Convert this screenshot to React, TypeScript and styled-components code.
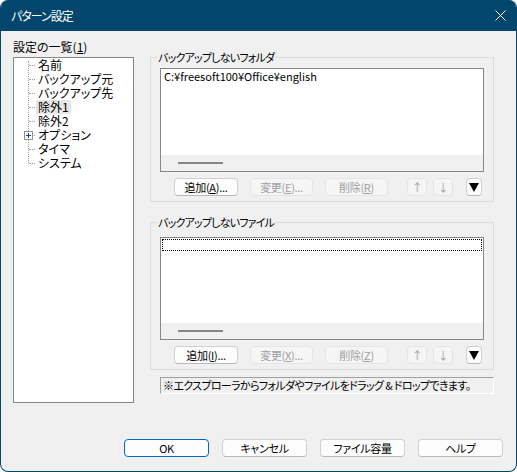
import React from "react";
import styled, { createGlobalStyle } from "styled-components";

const GlobalStyle = createGlobalStyle`
  html, body {
    margin: 0;
    padding: 0;
    background: #ffffff;
  }
  * {
    box-sizing: border-box;
  }
`;

const Window = styled.div`
  width: 517px;
  height: 472px;
  display: flex;
  flex-direction: column;
  background: #f0f0f0;
  border: 1px solid #02466d;
  border-top: none;
  border-radius: 8px;
  overflow: hidden;
  font-family: "Noto Sans CJK JP", "Noto Sans", sans-serif;
  font-size: 12px;
  font-feature-settings: "palt";
  color: #000000;
`;

const TitleBar = styled.div`
  height: 31px;
  flex: none;
  display: flex;
  align-items: center;
  justify-content: space-between;
  padding: 0 10px 0 10px;
  background: #02466d;
  color: #ffffff;
  font-size: 12px;
  letter-spacing: -1px;
`;

const Main = styled.div`
  display: flex;
  padding: 9px 22px 0 12px;
  gap: 16px;
`;

const LeftColumn = styled.div`
  width: 121px;
  display: flex;
  flex-direction: column;
  gap: 3px;
`;

const Caption = styled.div`
  line-height: 14px;
  height: 14px;
`;

const TreeBox = styled.div`
  height: 346px;
  background: #ffffff;
  border: 1px solid #828790;
`;

const TreeList = styled.ul`
  position: relative;
  list-style: none;
  margin: 0;
  padding: 0;
  &::before {
    content: "";
    position: absolute;
    left: 14px;
    top: 3px;
    height: 102px;
    border-left: 1px dotted #a0a0a0;
  }
`;

const TreeRow = styled.li`
  position: relative;
  height: 14px;
  line-height: 14px;
  padding-left: 22px;
  &::before {
    content: "";
    position: absolute;
    left: 15px;
    top: 7px;
    width: 6px;
    border-top: 1px dotted #a0a0a0;
  }
`;

const TreeLabel = styled.span<{ $selected?: boolean }>`
  display: inline-block;
  height: 14px;
  padding: 0 2px;
  background: ${(p) => (p.$selected ? "#e6e6e6" : "transparent")};
`;

const Expander = styled.span`
  position: absolute;
  left: 10px;
  top: 3px;
  width: 9px;
  height: 9px;
  background: #ffffff;
  border: 1px solid #919191;
  z-index: 1;
  &::before,
  &::after {
    content: "";
    position: absolute;
    background: #1e3c8c;
  }
  &::before {
    left: 1px;
    top: 3px;
    width: 5px;
    height: 1px;
  }
  &::after {
    left: 3px;
    top: 1px;
    width: 1px;
    height: 5px;
  }
`;

const RightColumn = styled.div`
  width: 344px;
  display: flex;
  flex-direction: column;
  padding-top: 11px;
`;

const Group = styled.fieldset<{ $top: number; $space?: number }>`
  margin: ${(p) => p.$space ?? 0}px 0 0 0;
  padding: ${(p) => p.$top}px 9px 5px 9px;
  border: 1px solid #dcdcdc;
  min-width: 0;
`;

const Legend = styled.legend`
  padding: 0 1px;
  margin-left: -3px;
  line-height: 12px;
  height: 12px;
  font-size: 11px;
  letter-spacing: -0.8px;
`;

const ListBox = styled.div<{ $height: number }>`
  height: ${(p) => p.$height}px;
  background: #ffffff;
  border: 1px solid #828790;
  display: flex;
  flex-direction: column;
`;

const ListItems = styled.div`
  flex: 1;
  padding: 1px;
`;

const ListItem = styled.div<{ $focus?: boolean }>`
  height: 12px;
  line-height: 12px;
  padding-left: 2px;
  font-size: 11px;
  outline: ${(p) => (p.$focus ? "1px dotted #000000" : "none")};
  outline-offset: -1px;
`;

const HScroll = styled.div`
  height: 16px;
  background: #f0f0f0;
  display: flex;
  align-items: center;
  padding-left: 17px;
`;

const Thumb = styled.div`
  width: 45px;
  height: 2px;
  background: #858585;
`;

const ButtonRow = styled.div`
  display: flex;
  margin-top: 6px;
  padding-left: 14px;
  gap: 12px;
`;

const Button = styled.button<{ $w: number; $lead?: number; $default?: boolean }>`
  width: ${(p) => p.$w}px;
  height: 18px;
  margin: 0 0 0 ${(p) => p.$lead ?? 0}px;
  padding: 0;
  display: flex;
  align-items: center;
  justify-content: center;
  font-family: inherit;
  font-size: 11px;
  letter-spacing: -0.3px;
  font-feature-settings: "palt";
  line-height: 12px;
  color: #000000;
  background: #fdfdfd;
  border: 1px solid ${(p) => (p.$default ? "#0067c0" : "#d0d0d0")};
  border-bottom-color: ${(p) => (p.$default ? "#0067c0" : "#b9b9b9")};
  border-radius: 4px;
  &:disabled {
    color: #a0a0a0;
    background: #f5f5f5;
    border-color: #e5e5e5;
  }
`;

const Triangle = styled.span`
  width: 0;
  height: 0;
  border-left: 5px solid transparent;
  border-right: 5px solid transparent;
  border-top: 9px solid #000000;
`;

const Note = styled.div`
  margin: 7px 0 0 10px;
  height: 17px;
  line-height: 15px;
  padding-left: 2px;
  font-size: 11px;
  letter-spacing: -0.65px;
  border-top: 1px solid #a0a0a0;
  border-left: 1px solid #a0a0a0;
  border-right: 1px solid #ffffff;
  border-bottom: 1px solid #ffffff;
  white-space: nowrap;
  overflow: hidden;
`;

const Footer = styled.div`
  display: flex;
  justify-content: flex-end;
  gap: 13px;
  padding: 0 13px 0 0;
  margin-top: 36px;
`;

const CloseIcon = () => (
  <svg width="11" height="11" viewBox="0 0 11 11">
    <path d="M0.5 0.5 L10.5 10.5 M10.5 0.5 L0.5 10.5" stroke="#ffffff" strokeWidth="1" />
  </svg>
);

const treeItems = ["名前", "バックアップ元", "バックアップ先", "除外1", "除外2", "オプション", "タイマ", "システム"];

type GroupProps = {
  title: string;
  top: number;
  space?: number;
  height: number;
  items: string[];
  focusEmpty?: boolean;
  keys: [string, string, string];
};

const ListGroup = ({ title, top, space, height, items, focusEmpty, keys }: GroupProps) => (
  <Group $top={top} $space={space}>
    <Legend>{title}</Legend>
    <ListBox $height={height}>
      <ListItems>
        {items.map((item) => (
          <ListItem key={item}>{item}</ListItem>
        ))}
        {focusEmpty && <ListItem $focus />}
      </ListItems>
      <HScroll>
        <Thumb />
      </HScroll>
    </ListBox>
    <ButtonRow>
      <Button $w={64}>
        追加(<u>{keys[0]}</u>)...
      </Button>
      <Button $w={63} disabled>
        変更(<u>{keys[1]}</u>)...
      </Button>
      <Button $w={63} disabled>
        削除(<u>{keys[2]}</u>)
      </Button>
      <Button $w={20} $lead={7} disabled>
        ↑
      </Button>
      <Button $w={20} $lead={-6} disabled>
        ↓
      </Button>
      <Button $w={16} $lead={1}>
        <Triangle />
      </Button>
    </ButtonRow>
  </Group>
);

const App = () => {
  return (
    <>
      <GlobalStyle />
      <Window>
        <TitleBar>
          <span>パターン設定</span>
          <CloseIcon />
        </TitleBar>
        <Main>
          <LeftColumn>
            <Caption>
              設定の一覧(<u>1</u>)
            </Caption>
            <TreeBox>
              <TreeList>
                {treeItems.map((item) => (
                  <TreeRow key={item}>
                    {item === "オプション" && <Expander />}
                    <TreeLabel $selected={item === "除外1"}>{item}</TreeLabel>
                  </TreeRow>
                ))}
              </TreeList>
            </TreeBox>
          </LeftColumn>
          <RightColumn>
            <ListGroup
              title="バックアップしないフォルダ"
              top={5}
              height={104}
              items={["C:¥freesoft100¥Office¥english"]}
              keys={["A", "E", "R"]}
            />
            <ListGroup
              title="バックアップしないファイル"
              top={9}
              space={14}
              height={103}
              items={[]}
              focusEmpty
              keys={["I", "X", "Z"]}
            />
            <Note>※エクスプローラからフォルダやファイルをドラッグ & ドロップできます。</Note>
          </RightColumn>
        </Main>
        <Footer>
          <Button $w={85} $default>
            OK
          </Button>
          <Button $w={85}>キャンセル</Button>
          <Button $w={85}>ファイル容量</Button>
          <Button $w={85}>ヘルプ</Button>
        </Footer>
      </Window>
    </>
  );
};

export default App;
